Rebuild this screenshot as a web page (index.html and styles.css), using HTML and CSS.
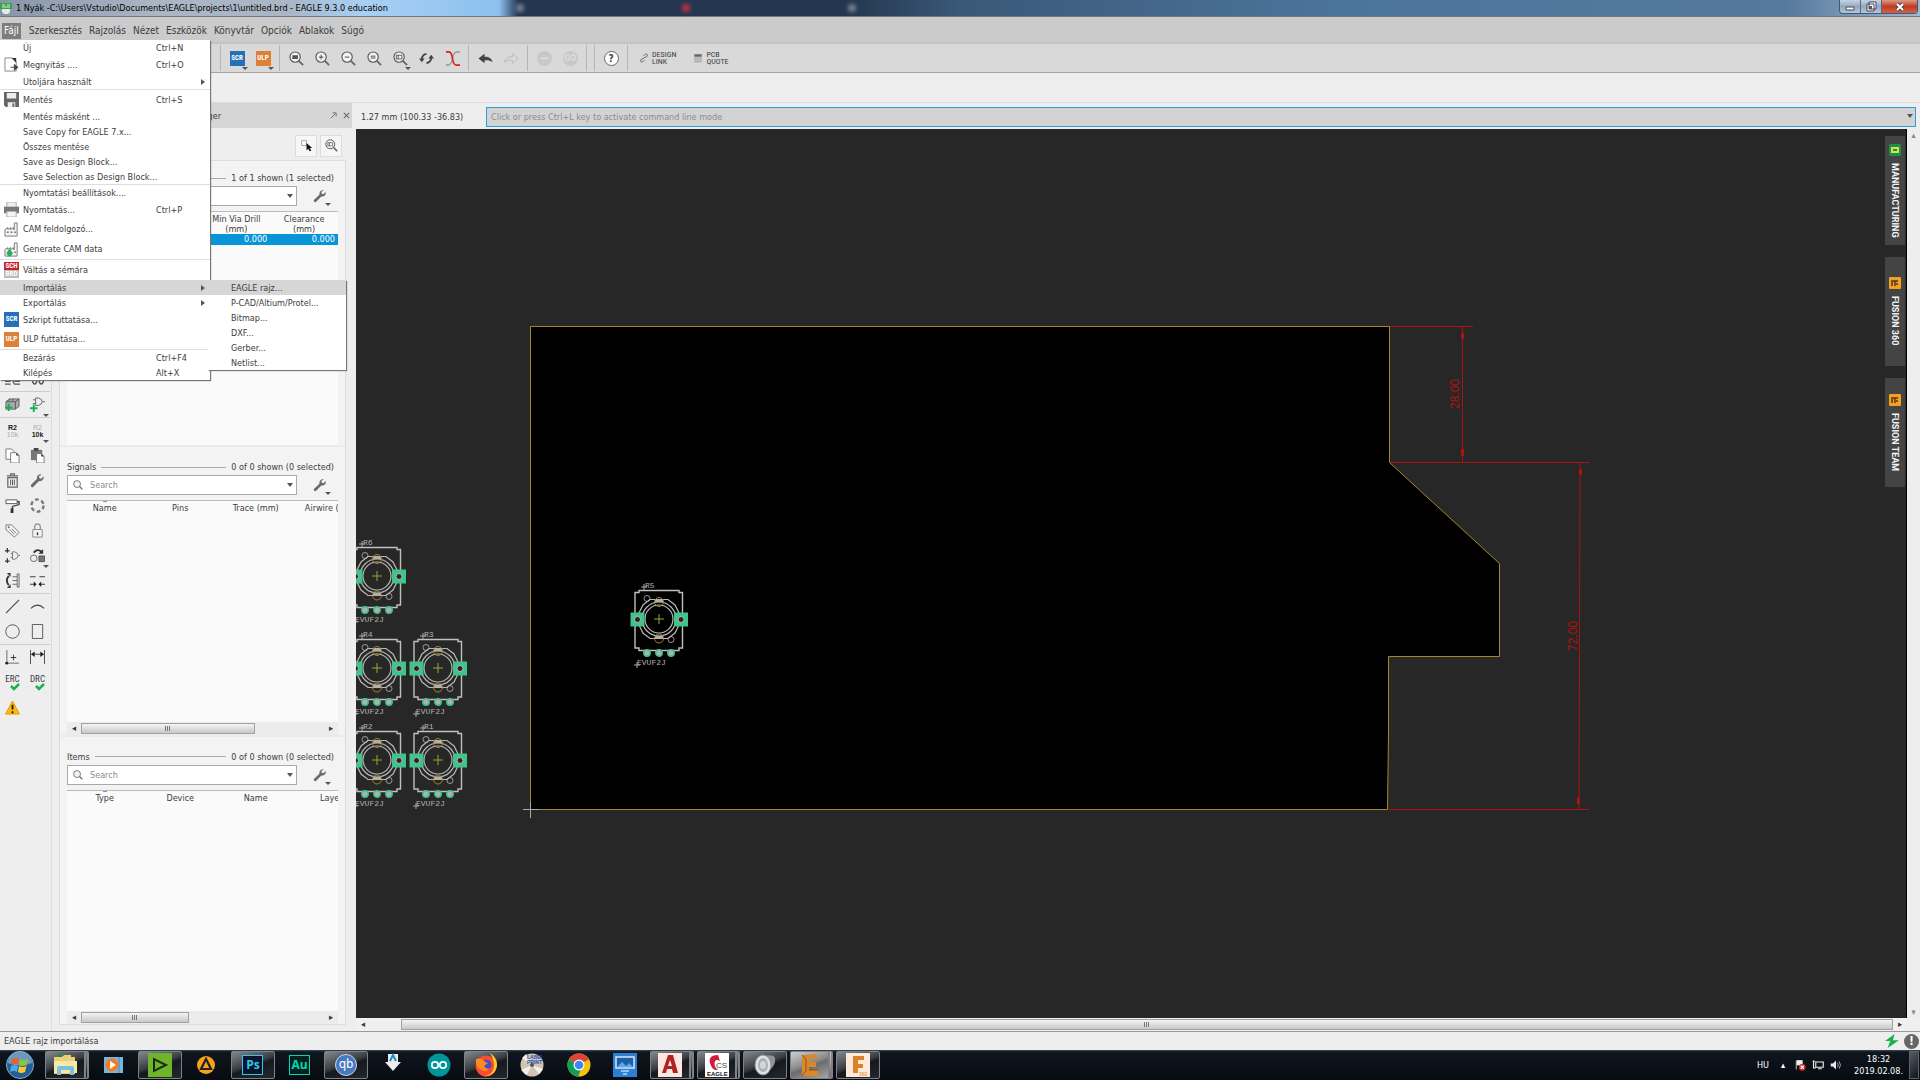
FILE: index.html
```html
<!DOCTYPE html>
<html lang="hu">
<head>
    <meta charset="UTF-8">
    <meta name="viewport" content="width=device-width, initial-scale=1.0">
    <title>EAGLE 9.3.0 education</title>
    <link rel="stylesheet" href="styles.css">
</head>
<body>
    <!-- Shared icons -->
    <svg class="defs" aria-hidden="true">
        <symbol id="lens" viewBox="0 0 16 16">
            <circle cx="6.5" cy="6.5" r="5.5" fill="#f4f4f4" stroke="#555" stroke-width="1.2"/>
            <path d="M10.5 10.5l4.5 4.5" stroke="#666" stroke-width="2"/>
        </symbol>
        <symbol id="wrench" viewBox="0 0 16 16">
            <path d="M2.5 13.5L9 7" stroke="#6a6a6a" stroke-width="3.2" stroke-linecap="round"/>
            <path d="M12.5 1.5a4 4 0 0 0-5 5l2 2a4 4 0 0 0 5-5l-2.5 2.5-2-0.5-0.5-2z" fill="#6a6a6a"/>
        </symbol>
        <symbol id="factory" viewBox="0 0 16 16">
            <path d="M1 15V8l3-2v2l3-2v2l3-2v2h1V1h3v14z" fill="#f4f4f4" stroke="#777"/>
            <path d="M3 11h2M7 11h2M11 11h2" stroke="#777" stroke-width="1.5"/>
        </symbol>
        <symbol id="fusion" viewBox="0 0 12 12">
            <rect width="12" height="12" rx="1" fill="#f5a01e"/>
            <path d="M3 9V4h6M6 9V4M3 4v2M8 6v2" fill="none" stroke="#4a3a20" stroke-width="1.5"/>
        </symbol>
        <symbol id="part" viewBox="-30 -30 60 70" overflow="visible">
            <path d="M-20 -28.5H20V-26.5H23.5V29H20V31.5H-20V29H-24V-26.5H-20z" fill="none" stroke="#c0c0c0" stroke-width="1.4"/>
            <g fill="none" stroke="#b8b8b8" stroke-width="1.2">
                <circle r="14"/>
                <circle r="17"/>
                <path d="M-9 -19.5H9L16 -14L20 -6V6L16 14L9 19.5H-9L-16 14L-20 6V-6L-16 -14z"/>
                <circle cx="-12" cy="-20.5" r="3" stroke-width="0.8"/>
                <circle cx="12" cy="20.5" r="3" stroke-width="0.8"/>
            </g>
            <path d="M-4 -17h8v-3h-8zM-4 20h8v-3h-8z" fill="#b0b0b0"/>
            <circle cy="-17" r="4.5" fill="none" stroke="#a8822a"/>
            <circle cy="19.5" r="4.5" fill="none" stroke="#a8822a"/>
            <path d="M-28.5 -6.5h14v14h-14zM15 -6.5h14v14H15z" fill="#3fc48c"/>
            <circle cx="-21.5" cy="0.5" r="3" fill="#262626" stroke="#bbb"/>
            <circle cx="22" cy="0.5" r="3" fill="#262626" stroke="#bbb"/>
            <g fill="#b0b0b0" stroke="#3fc48c" stroke-width="1.5">
                <circle cx="-12" cy="34" r="3.2"/>
                <circle cy="34" r="3.2"/>
                <circle cx="12" cy="34" r="3.2"/>
            </g>
            <path d="M-5 0H5M0 -5V5" stroke="#9aa832"/>
            <path d="M-18 -32h6M-15 -35v6M-25 46h6M-22 43v6" stroke="#aaa"/>
        </symbol>
    </svg>

    <header class="titlebar">
        <svg class="app-icon" viewBox="0 0 12 12"><path d="M0 1h12v6H0z" fill="#37a34a"/><path d="M2 7h8v3l-2 2H4l-2-2z" fill="#e8e8e8"/><path d="M2 3h3M7 3h3M2 5h8" stroke="#d5f0d5"/></svg>
        <h1>1 Nyák -C:\Users\Vstudio\Documents\EAGLE\projects\1\untitled.brd - EAGLE 9.3.0 education</h1>
        <div class="behind"><i></i><i></i><i></i></div>
        <div class="window-buttons">
            <button aria-label="Minimize"><svg viewBox="0 0 12 12"><path d="M2 6h8v3H2z" fill="#fff" stroke="#445"/></svg></button>
            <button aria-label="Restore"><svg viewBox="0 0 12 12"><path d="M4 1h7v7H4zM2 3h7v7H2z" fill="#fff" stroke="#445"/><path d="M4 5h3v3H4z" fill="#556"/></svg></button>
            <button class="close" aria-label="Close"><svg viewBox="0 0 12 12"><path d="M3 3l6 6M9 3l-6 6" stroke="#544" stroke-width="4"/><path d="M3 3l6 6M9 3l-6 6" stroke="#fff" stroke-width="2"/></svg></button>
        </div>
    </header>

    <nav class="menubar">
        <button class="active">Fájl</button>
        <button>Szerkesztés</button>
        <button>Rajzolás</button>
        <button>Nézet</button>
        <button>Eszközök</button>
        <button>Könyvtár</button>
        <button>Opciók</button>
        <button>Ablakok</button>
        <button>Súgó</button>
    </nav>

    <div class="toolbar">
        <span class="sep"></span>
        <button class="drop"><b class="tag scr">SCR</b></button>
        <button class="drop"><b class="tag ulp">ULP</b></button>
        <span class="sep"></span>
        <button aria-label="Zoom fit"><svg viewBox="0 0 16 16"><use href="#lens"/><path d="M3.5 4.5h6v4h-6z" fill="#555"/></svg></button>
        <button aria-label="Zoom in"><svg viewBox="0 0 16 16"><use href="#lens"/><path d="M4 6.5h5M6.5 4v5" stroke="#444"/></svg></button>
        <button aria-label="Zoom out"><svg viewBox="0 0 16 16"><use href="#lens"/><path d="M4 6.5h5" stroke="#444"/></svg></button>
        <button aria-label="Redraw"><svg viewBox="0 0 16 16"><use href="#lens"/><path d="M4 5.5h5M4 7.5h5" stroke="#444"/></svg></button>
        <button class="drop" aria-label="Zoom select"><svg viewBox="0 0 16 16"><use href="#lens"/><path d="M3.5 4.5h6v4h-6zM5.5 4.5v4" fill="none" stroke="#555"/></svg></button>
        <button aria-label="Refresh"><svg viewBox="0 0 16 16"><path d="M3 9q0-5 5-6M13 7q0 5-5 6" fill="none" stroke="#444" stroke-width="2"/><path d="M0 8h6l-3 4zM10 8h6l-3-4z" fill="#444"/></svg></button>
        <button aria-label="Cross"><svg viewBox="0 0 16 16"><path d="M16 1h-4Q9 2 8 8t-4 7H1" fill="none" stroke="#999" stroke-width="1.5"/><path d="M1 1h3q3 0 4 7t4 7h4" fill="none" stroke="#dc1f1f" stroke-width="1.8"/></svg></button>
        <span class="sep"></span>
        <button aria-label="Undo"><svg viewBox="0 0 16 16"><path d="M0.5 8L7 3v3c5 0 8 2 8.500 6C13 10 10 9.500 7 10v3z" fill="#444"/></svg></button>
        <button aria-label="Redo" disabled><svg viewBox="0 0 16 16"><path d="M15.500 8L9 3v3C4 6 1 8 .5 12 3 10 6 9.500 9 10v3z" fill="none" stroke="#bbb"/></svg></button>
        <span class="sep"></span>
        <button aria-label="Stop" disabled><svg viewBox="0 0 16 16"><circle cx="8" cy="8" r="8" fill="#c8c8c8"/><path d="M4 8h8" stroke="#ddd" stroke-width="2"/></svg></button>
        <button disabled><b class="go">GO</b></button>
        <span class="sep"></span>
        <span class="sep close-sep"></span>
        <button aria-label="Help"><b class="help">?</b></button>
        <span class="sep"></span>
        <button class="wide"><svg viewBox="0 0 16 16"><path d="M6 10l4-4M7 5l3-3q2-1 3 0t0 3l-3 3M9 11l-3 3q-2 1-3 0t0-3l3-3" fill="none" stroke="#666" stroke-width="1.5"/></svg><span>DESIGN<br>LINK</span></button>
        <button class="wide"><svg viewBox="0 0 16 16"><path d="M2 2h12v4H2z" fill="#666"/><path d="M2 8h12M2 11h12M2 14h12" stroke="#777"/></svg><span>PCB<br>QUOTE</span></button>
    </div>

    <div class="options"></div>

    <main class="workspace">
        <aside class="tools">
            <div class="tool-group">
                <button><svg viewBox="0 0 16 16"><path d="M0 11h6M0 14h6M10 11h6M10 14h6M7 8l3 6" fill="none" stroke="#555" stroke-width="1.2"/></svg></button>
                <button><svg viewBox="0 0 16 16"><path d="M3 8v4q2 4 4 0V8M10 8v4q2 4 4 0V8" fill="none" stroke="#444" stroke-width="1.5"/></svg></button>
            </div>
            <div class="tool-group">
                <button><svg viewBox="0 0 16 16"><path d="M1 5l4-3h10v8l-4 3H1z" fill="#aaa" stroke="#666"/><path d="M1 5h10v8M11 5l4-3M4 4l1-2M8 4l1-2" fill="none" stroke="#555"/><path d="M0 11h8M4 7v8" stroke="#19b14b" stroke-width="2"/></svg></button>
                <button class="drop"><svg viewBox="0 0 16 16"><path d="M6 1h3q4 1 4 4t-4 4H6zM3 3h3M3 7h3M13 5h3" fill="none" stroke="#666"/><path d="M0 12h8M4 8v8" stroke="#19b14b" stroke-width="2"/></svg></button>
            </div>
            <div class="tool-group">
                <button class="value"><b>R2</b><span>10k</span></button>
                <button class="value drop"><span>R2</span><b>10k</b></button>
                <button><svg viewBox="0 0 16 16"><path d="M1 1h6l3 3v8H1z" fill="#fff" stroke="#777"/><path d="M6 5h6l3 3v8H6z" fill="#fff" stroke="#777"/><path d="M12 5v3h3z" fill="#333"/></svg></button>
                <button><svg viewBox="0 0 16 16"><path d="M1 2h12v11H1z" fill="#777"/><path d="M4 0h5v3H4z" fill="#444"/><path d="M7 6h5l3 3v7H7z" fill="#fff" stroke="#777"/><path d="M12 6v3h3z" fill="#333"/></svg></button>
                <button><svg viewBox="0 0 16 16"><path d="M2 3h12M6 3V1h4v2M3 5h10v10H3z" fill="none" stroke="#666" stroke-width="1.3"/><path d="M6 7v6M8 7v6M10 7v6" stroke="#555"/></svg></button>
                <button><svg viewBox="0 0 16 16"><use href="#wrench"/></svg></button>
                <button><svg viewBox="0 0 16 16"><path d="M1 2h12v4H1z" fill="#fff" stroke="#555"/><path d="M13 4h2v3L8 9v3" fill="none" stroke="#444" stroke-width="1.5"/><path d="M6 11h3v5H6z" fill="#333"/></svg></button>
                <button><svg viewBox="0 0 16 16"><circle cx="8" cy="8" r="6.5" fill="none" stroke="#777" stroke-width="2.5" stroke-dasharray="4 2.8"/></svg></button>
                <button><svg viewBox="0 0 16 16"><path d="M1 2h6l8 8-5 5-9-8z" fill="#f5f5f5" stroke="#777"/><path d="M5 7l5 5M7 6l5 5" stroke="#777"/><circle cx="4" cy="4.5" r="1" fill="#666"/></svg></button>
                <button><svg viewBox="0 0 16 16"><path d="M5 7V4q0-3 3-3t3 3v3" fill="none" stroke="#999" stroke-width="1.5"/><path d="M3 7h10v8H3z" fill="#f5f5f5" stroke="#888"/><path d="M8 10v3" stroke="#333" stroke-width="1.5"/></svg></button>
                <button><svg viewBox="0 0 16 16"><path d="M0 3h5M2.500 0v5M0 14h5M2.500 11v5" stroke="#333" stroke-width="1.3"/><path d="M8 4h2q4 1 4 4t-4 4H8zM6 6h2M6 10h2M14 8h2" fill="none" stroke="#777"/></svg></button>
                <button class="drop"><svg viewBox="0 0 16 16"><path d="M4 5q4-5 8-1" fill="none" stroke="#333" stroke-width="2"/><path d="M14 1v5H9z" fill="#333"/><circle cx="4" cy="11" r="3.5" fill="none" stroke="#666"/><path d="M9.500 8.500h6v6h-6z" fill="#777" stroke="#456"/></svg></button>
                <button><svg viewBox="0 0 16 16"><path d="M4 3q-4 5 0 10" fill="none" stroke="#333" stroke-width="2"/><path d="M2 0h4v4zM2 16h4v-4z" fill="#333"/><path d="M8 4h5M8 8h5M8 12h5M13 1h2v14h-2z" fill="none" stroke="#666"/></svg></button>
                <button><svg viewBox="0 0 16 16"><path d="M0 4h6M10 4h6M0 12h5M11 12h5" stroke="#333"/><path d="M4 9l3 3-3 3zM12 9l-3 3 3 3z" fill="#222"/></svg></button>
            </div>
            <div class="tool-group">
                <button><svg viewBox="0 0 16 16"><path d="M1 15L15 1" stroke="#444" stroke-width="1.2"/></svg></button>
                <button><svg viewBox="0 0 16 16"><path d="M1 10q7-7 14 0" fill="none" stroke="#444" stroke-width="1.2"/></svg></button>
                <button><svg viewBox="0 0 16 16"><circle cx="8" cy="8" r="7.2" fill="none" stroke="#555"/></svg></button>
                <button><svg viewBox="0 0 16 16"><path d="M2.500 .5h11v15h-11z" fill="none" stroke="#555"/></svg></button>
            </div>
            <div class="tool-group">
                <button><svg viewBox="0 0 16 16"><path d="M2 0v15M0 14h15" stroke="#666"/><path d="M6 8h6M9 5v6" stroke="#333"/><circle cx="2" cy="14" r="1.5" fill="#222"/></svg></button>
                <button><svg viewBox="0 0 16 16"><path d="M.5 0v15M15.500 0v15M2 4.500h12" stroke="#444"/><path d="M1 4.500l4-3v6zM15 4.500l-4-3v6z" fill="#222"/></svg></button>
                <button class="check">ERC<svg viewBox="0 0 10 8"><path d="M1 3l3 3 5-5" fill="none" stroke="#19b14b" stroke-width="2.5"/></svg></button>
                <button class="check">DRC<svg viewBox="0 0 10 8"><path d="M1 3l3 3 5-5" fill="none" stroke="#19b14b" stroke-width="2.5"/></svg></button>
                <button><svg viewBox="0 0 16 16"><path d="M8 1l7.500 14H.5z" fill="#fdb813" stroke="#e39b00"/><path d="M8 5v5M8 12v2" stroke="#222" stroke-width="2"/></svg></button>
            </div>
        </aside>

        <section class="manager">
            <div class="manager-head">
                <h2>Design Manager</h2>
                <button aria-label="Float"><svg viewBox="0 0 8 8"><path d="M1 7l5-5M3 1h4v4" fill="none" stroke="#666"/></svg></button>
                <button aria-label="Close"><svg viewBox="0 0 8 8"><path d="M1 1l6 6M7 1L1 7" stroke="#666" stroke-width="1.2"/></svg></button>
            </div>
            <div class="manager-tools">
                <button aria-label="Select"><svg viewBox="0 0 16 16"><path d="M2 2h6v6H2z" fill="#fff" stroke="#999"/><path d="M8 5v9l2-2 2 3 2-1-2-3h3z" fill="#111"/></svg></button>
                <button aria-label="Zoom to selection"><svg viewBox="0 0 16 16"><use href="#lens"/><path d="M3.500 4.500h6v4h-6zM5.500 4.500v4" fill="none" stroke="#666"/></svg></button>
            </div>
            <div class="groups">
                <div class="group">
                    <div class="group-title"><h3>Classes</h3><hr><span>1 of 1 shown (1 selected)</span></div>
                    <div class="search">
                        <label><svg viewBox="0 0 16 16"><use href="#lens"/></svg><input type="text" aria-label="Search classes"></label>
                        <button class="drop" aria-label="Settings"><svg viewBox="0 0 16 16"><use href="#wrench"/></svg></button>
                    </div>
                    <div class="list">
                        <table class="classes">
                            <tr><th>Name</th><th>Width</th><th>Min Via Drill<br>(mm)</th><th>Clearance<br>(mm)</th></tr>
                            <tr class="selected"><td></td><td></td><td>0.000</td><td>0.000</td></tr>
                        </table>
                    </div>
                </div>
                <div class="group">
                    <div class="group-title"><h3>Signals</h3><hr><span>0 of 0 shown (0 selected)</span></div>
                    <div class="search">
                        <label><svg viewBox="0 0 16 16"><use href="#lens"/></svg><input type="text" placeholder="Search" aria-label="Search signals"></label>
                        <button class="drop" aria-label="Settings"><svg viewBox="0 0 16 16"><use href="#wrench"/></svg></button>
                    </div>
                    <div class="list">
                        <table><tr><th class="sorted">Name</th><th>Pins</th><th>Trace (mm)</th><th>Airwire (mm)</th></tr></table>
                        <div class="scroll"><span>◂</span><div class="thumb long"></div><span>▸</span></div>
                    </div>
                </div>
                <div class="group">
                    <div class="group-title"><h3>Items</h3><hr><span>0 of 0 shown (0 selected)</span></div>
                    <div class="search">
                        <label><svg viewBox="0 0 16 16"><use href="#lens"/></svg><input type="text" placeholder="Search" aria-label="Search items"></label>
                        <button class="drop" aria-label="Settings"><svg viewBox="0 0 16 16"><use href="#wrench"/></svg></button>
                    </div>
                    <div class="list">
                        <table><tr><th class="sorted">Type</th><th>Device</th><th>Name</th><th>Layer</th></tr></table>
                        <div class="scroll"><span>◂</span><div class="thumb"></div><span>▸</span></div>
                    </div>
                </div>
            </div>
        </section>

        <section class="editor">
            <div class="command">
                <span class="coords">1.27 mm (100.33 -36.83)</span>
                <div class="command-box"><input type="text" placeholder="Click or press Ctrl+L key to activate command line mode" aria-label="Command line"></div>
            </div>
            <div class="canvas-row">
                <div class="canvas">
                    <svg class="board" viewBox="356 129 1550 889" preserveAspectRatio="xMinYMin meet">
                        <path d="M530.500 326.500H1389.500V462.500L1499.500 563.500V656.500H1388.500V733L1387.500 809.500H530.500z" fill="#000" stroke="#a8842c"/>
                        <path d="M523 809.500h16M530.500 802v16" stroke="#aaa"/>
                        <!-- dimensions -->
                        <g stroke="#a81414" fill="none">
                            <path d="M1390 326.500h83M1390 462.500h199.500M1388 809.500h201M1462.500 327v135M1580 463L1579 809"/>
                            <path d="M1462.500 333v6M1462.500 449v7M1580.500 469v6M1578.500 797v7" stroke-width="3"/>
                        </g>
                        <g class="dimension">
                            <text transform="translate(1459 409) rotate(-90)">28.00</text>
                            <text transform="translate(1577 651) rotate(-90)">72.00</text>
                        </g>
                        <!-- potentiometers -->
                        <use href="#part" x="347" y="546" width="60" height="70"/>
                        <use href="#part" x="347" y="638" width="60" height="70"/>
                        <use href="#part" x="408" y="638" width="60" height="70"/>
                        <use href="#part" x="347" y="730" width="60" height="70"/>
                        <use href="#part" x="408" y="730" width="60" height="70"/>
                        <use href="#part" x="629" y="589" width="60" height="70"/>
                        <g class="part-label">
                            <text x="363" y="545">R6</text><text x="355" y="622">EVUF2J</text>
                            <text x="363" y="637">R4</text><text x="355" y="714">EVUF2J</text>
                            <text x="424" y="637">R3</text><text x="416" y="714">EVUF2J</text>
                            <text x="363" y="729">R2</text><text x="355" y="806">EVUF2J</text>
                            <text x="424" y="729">R1</text><text x="416" y="806">EVUF2J</text>
                            <text x="645" y="588">R5</text><text x="637" y="665">EVUF2J</text>
                        </g>
                    </svg>
                    <div class="side-tabs">
                        <button><svg viewBox="0 0 12 12"><rect width="12" height="12" rx="1" fill="#1d9148"/><path d="M3 4h6v4H3z" fill="none" stroke="#d8e04a" stroke-width="2"/><path d="M4 5h4v2H4z" fill="#1d9148"/></svg>MANUFACTURING</button>
                        <button><svg viewBox="0 0 12 12"><use href="#fusion"/></svg>FUSION 360</button>
                        <button><svg viewBox="0 0 12 12"><use href="#fusion"/></svg>FUSION TEAM</button>
                    </div>
                </div>
                <div class="v-scroll"><span>▴</span><span>▾</span></div>
            </div>
            <div class="scroll h-scroll"><span>◂</span><div class="thumb"></div><span>▸</span></div>
        </section>
    </main>

    <div class="status">
        <span>EAGLE rajz importálása</span>
        <svg viewBox="0 0 16 16"><path d="M11 0L0 8h6l-3 8L16 7H9z" fill="#19b14b"/></svg>
        <b class="alert">!</b>
    </div>

    <footer class="taskbar">
        <button class="start" aria-label="Start"><svg viewBox="0 0 28 28"><circle cx="14" cy="14" r="13.5" fill="#235f96" stroke="#7fa9c8"/><path d="M2 12a12 12 0 0 1 24 0q-12 5-24 0z" fill="#8ab4d0" opacity=".7"/><path d="M6 8q4-2 7-.5l-1 6q-3-1.500-7 0z" fill="#e8622b"/><path d="M14 8q4 2 8 0l-1.500 6q-4 2-7.500 0z" fill="#8cc63f"/><path d="M5 15q4-2 7 0l-1 6q-3-2-7 0z" fill="#4aa8e8"/><path d="M13 15q4 2 7.500 0L19 21q-4 2-7 0z" fill="#fdc92f"/></svg></button>
        <div class="tasks">
            <button class="open stacked"><svg viewBox="0 0 24 24"><path d="M1 4h8l1-2h8v2h4v17H1z" fill="#e8cf78"/><path d="M1 8h23v12H1z" fill="#f8e9a5"/><path d="M4 22v-7q0-2 2-2h13q2 0 2 2v7h-4v-5H8v5z" fill="#79bfe4"/><path d="M4 3h2M9 2h2" stroke="#2a9c3c" stroke-width="2"/></svg></button>
            <button><svg viewBox="0 0 24 24"><path d="M3 4h19v16H3z" fill="#7ab6dc"/><path d="M18 4v16" stroke="#4a88b4"/><circle cx="11" cy="12" r="6.5" fill="#f47a20"/><path d="M9 8l6 4-6 4z" fill="#fff"/></svg></button>
            <button class="open"><svg viewBox="0 0 24 24"><path d="M0 0h24v24H0z" fill="#6fb52c"/><path d="M6 6v12l12-6z" fill="none" stroke="#1c2c10" stroke-width="2"/></svg></button>
            <button><svg viewBox="0 0 24 24"><circle cx="12" cy="12" r="9" fill="#f7a11b"/><path d="M12 6l5 10H7z" fill="none" stroke="#222" stroke-width="2.2"/></svg></button>
            <button class="open"><b class="adobe ps">Ps</b></button>
            <button><b class="adobe au">Au</b></button>
            <button class="open"><b class="qb">qb</b></button>
            <button><svg viewBox="0 0 24 24"><path d="M7 1h10v8h3l-8 9-8-9h3z" fill="#eee"/><path d="M9 8l3-6 3 6" fill="none" stroke="#1a90c4" stroke-width="2"/></svg></button>
            <button><svg viewBox="0 0 24 24"><circle cx="12" cy="12" r="11.5" fill="#00979c"/><circle cx="8" cy="12" r="3.2" fill="none" stroke="#fff" stroke-width="1.7"/><circle cx="16" cy="12" r="3.2" fill="none" stroke="#fff" stroke-width="1.7"/></svg></button>
            <button class="open"><svg viewBox="0 0 24 24"><circle cx="12" cy="13" r="10.5" fill="#ff4a2d"/><path d="M16 0q9 6 6.500 15a11 11 0 0 1-13 8q8 0 10-7T16 0z" fill="#ffc928"/><circle cx="12" cy="12" r="5.5" fill="#4b4bc8"/><path d="M2 6q6-2 9 3l3 1-4 3q2 4 6 2-3 5-9 2T2 6z" fill="#ff8a1f"/></svg></button>
            <button><svg viewBox="0 0 24 24"><circle cx="12" cy="12" r="11.5" fill="#cfc5b2"/><path d="M12 12L2 5l4-4zM12 12l11 4-4 5zM12 12L1 17l6 5z" fill="#f3efe6"/><circle cx="12" cy="12" r="2" fill="#555"/><text x="7" y="6" class="label-text">LABEL</text><text x="7" y="11" class="label-text">PRINT</text></svg></button>
            <button><svg viewBox="0 0 24 24"><circle cx="12" cy="12" r="11.5" fill="#f4c20d"/><path d="M2 6.300A11.500 11.500 0 0 1 22 6.300L12 12z" fill="#db4437"/><path d="M2 6.300A11.500 11.500 0 0 0 11 23.500L15 14 12 12z" fill="#0f9d58"/><circle cx="12" cy="12" r="5.5" fill="#fff"/><circle cx="12" cy="12" r="4.3" fill="#4285f4"/></svg></button>
            <button><svg viewBox="0 0 24 24"><path d="M0 0h24v24H0z" fill="#2a80d4"/><path d="M3 4h18v11H3z" fill="#1d5fa8" stroke="#d5e8fa" stroke-width="1.5"/><path d="M4 14l5-5 4 4 3-3 4 4z" fill="#5fa8e8"/><path d="M8 18h8M10 21h4" stroke="#fff"/></svg></button>
            <button class="open stacked"><svg viewBox="0 0 24 24"><path d="M0 0h24v24H0z" fill="#fbe8e0"/><path d="M10 2h5l5 18h-5l-1-4H9l-1 4H4zM12 7l-2 6h4z" fill="#b32222" fill-rule="evenodd"/></svg></button>
            <button class="open stacked"><svg viewBox="0 0 24 24"><path d="M0 0h24v24H0z" fill="#fff"/><path d="M13 2Q3 2 5 10t8 7Q8 13 10 8q2-2 5 0z" fill="#d01c38"/><text x="11" y="15" class="cs-text">CS</text><text x="2" y="23" class="eagle-text">EAGLE</text></svg></button>
            <button class="open"><svg viewBox="0 0 24 24"><path d="M12 3q8-2 10 2 1 6-4 11l-6 5z" fill="#8d949a"/><ellipse cx="10" cy="12" rx="8" ry="10" fill="#dfe3e6" stroke="#8a9096"/><ellipse cx="10" cy="12" rx="5" ry="7" fill="#a9b0b6"/><ellipse cx="10" cy="12" rx="3" ry="4" fill="#d0d6da"/></svg></button>
            <button class="open current stacked"><svg viewBox="0 0 24 24"><path d="M4 2l15-1v5h-8v3h7v5h-7v3h9v6H4z" fill="#d9882b"/><path d="M4 2l4 4v12l-4 5M11 17l9 0" fill="none" stroke="#8c4f10"/></svg></button>
            <button class="open"><svg viewBox="0 0 24 24"><path d="M0 0h24v24H0z" fill="#fdeadb"/><path d="M7 3h11v4h-6v4h5v4h-5v5H7z" fill="#d9822b"/><text x="13" y="23" class="f360-text">360</text></svg></button>
        </div>
        <div class="tray">
            <span>HU</span>
            <span class="up">▴</span>
            <svg viewBox="0 0 16 16"><path d="M3 2v12M4 2h7v6H4z" fill="#eee" stroke="#eee"/><circle cx="11" cy="11" r="4.5" fill="#d92a2a"/><path d="M9 9l4 4M13 9l-4 4" stroke="#fff" stroke-width="1.5"/></svg>
            <svg viewBox="0 0 16 16"><path d="M5 4h10v7H5zM8 13h5M2 2v5M1 3h3M2 7v5h3" fill="none" stroke="#eee" stroke-width="1.5"/></svg>
            <svg viewBox="0 0 16 16"><path d="M1 6h3l4-4v12l-4-4H1z" fill="#eee"/><path d="M10 5q2 3 0 6M12 3q4 5 0 10" fill="none" stroke="#ccc"/></svg>
            <time>18:32<br>2019.02.08.</time>
            <button class="show-desktop" aria-label="Show desktop"></button>
        </div>
    </footer>

    <div class="menu file-menu">
        <button><span>Új</span><kbd>Ctrl+N</kbd></button>
        <button class="tall"><svg viewBox="0 0 16 16"><path d="M1 1h8l4 4v10H1z" fill="#fff" stroke="#888"/><path d="M8 1l5 5V1z" fill="#333"/><path d="M7 11h5M11 8l4 3-4 3z" fill="#444" stroke="#444"/></svg><span>Megnyitás ....</span><kbd>Ctrl+O</kbd></button>
        <button class="more"><span>Utoljára használt</span></button>
        <hr>
        <button class="tall"><svg viewBox="0 0 16 16"><path d="M0 0h16v16H2l-2-2z" fill="#666"/><path d="M3 1h10v6H3zM4 11h8v5H4z" fill="#eee"/><path d="M9 12h2v4H9z" fill="#666"/></svg><span>Mentés</span><kbd>Ctrl+S</kbd></button>
        <button><span>Mentés másként ...</span></button>
        <button><span>Save Copy for EAGLE 7.x...</span></button>
        <button><span>Összes mentése</span></button>
        <button><span>Save as Design Block...</span></button>
        <button><span>Save Selection as Design Block...</span></button>
        <hr>
        <button><span>Nyomtatási beállítások....</span></button>
        <button class="tall"><svg viewBox="0 0 16 16"><path d="M3 0h10v6H3z" fill="#eee" stroke="#aaa"/><path d="M0 5h16v7H0z" fill="#777"/><path d="M3 10h10v6H3z" fill="#f4f4f4" stroke="#aaa"/></svg><span>Nyomtatás...</span><kbd>Ctrl+P</kbd></button>
        <button class="taller"><svg viewBox="0 0 16 16"><use href="#factory"/></svg><span>CAM feldolgozó...</span></button>
        <button class="taller"><svg viewBox="0 0 16 16"><use href="#factory"/><path d="M4.500 8h3v4H10l-4 4-4-4h2.500z" fill="#19b14b"/></svg><span>Generate CAM data</span></button>
        <hr>
        <button class="taller"><b class="sch"><i>SCH</i><i>BRD</i></b><span>Váltás a sémára</span></button>
        <button class="more hover"><span>Importálás</span></button>
        <button class="more"><span>Exportálás</span></button>
        <button class="tall"><b class="tag scr">SCR</b><span>Szkript futtatása...</span></button>
        <button class="taller"><b class="tag ulp">ULP</b><span>ULP futtatása...</span></button>
        <hr>
        <button><span>Bezárás</span><kbd>Ctrl+F4</kbd></button>
        <button><span>Kilépés</span><kbd>Alt+X</kbd></button>
    </div>

    <div class="menu import-menu">
        <button class="hover"><span>EAGLE rajz...</span></button>
        <button><span>P-CAD/Altium/Protel...</span></button>
        <button><span>Bitmap...</span></button>
        <button><span>DXF...</span></button>
        <button><span>Gerber...</span></button>
        <button><span>Netlist...</span></button>
    </div>
</body>
</html>
```
FILE: styles.css
```css
* {
    box-sizing: border-box;
}

body {
    margin: 0;
    height: 100vh;
    display: flex;
    flex-direction: column;
    overflow: hidden;
    background-color: #eee;
    color: #3c3c3c;
    font-family: "DejaVu Sans Condensed", "DejaVu Sans", sans-serif;
    font-size: 9px;
    line-height: 12px;
}

button {
    border: 0;
    padding: 0;
    background: none;
    color: inherit;
    font: inherit;
}

h1, h2, h3 {
    margin: 0;
    font-size: 9px;
    font-weight: normal;
}

svg {
    display: block;
    flex: none;
}

.defs {
    position: absolute;
    width: 0;
    height: 0;
}

/* Title bar */
.titlebar {
    height: 17px;
    flex: none;
    display: flex;
    align-items: center;
    background: linear-gradient(90deg, #8795a8, #aab6c5 8%, #a9b6c6 15%, #a8d0f4 19%, #8cc0ee 26%, #24364f 27%, #24364f 44%, #3a5878 50%, #4c759c 70%, #55799d 93%, #9db8d2);
    border-bottom: 1px solid #6d7580;
    color: #000;
}

.app-icon {
    width: 12px;
    height: 12px;
    margin: 0 4px 0 0;
}

.behind {
    flex: 1;
    display: flex;
    gap: 158px;
    padding-left: 128px;
}

.behind i {
    width: 8px;
    height: 8px;
    border-radius: 4px;
    background: #7a8494;
    filter: blur(2px);
}

.behind i:nth-child(2) {
    background: #c03040;
}

.window-buttons {
    display: flex;
    align-self: flex-start;
    margin-right: 2px;
    border: 1px solid #44576c;
    border-top: 0;
    border-radius: 0 0 4px 4px;
    overflow: hidden;
}

.window-buttons button {
    width: 21px;
    height: 13px;
    display: flex;
    justify-content: center;
    align-items: center;
    border-right: 1px solid #56697e;
    background: linear-gradient(#c5d4e4, #93a9c0 50%, #b4c6da);
}

.window-buttons .close {
    width: 35px;
    border: 0;
    background: linear-gradient(#dd9a88, #c03c20 50%, #d4624a);
}

.window-buttons svg {
    width: 12px;
    height: 12px;
}

/* Menu bar */
.menubar {
    height: 27px;
    flex: none;
    display: flex;
    align-items: center;
    gap: 7px;
    padding: 2px 2px 0;
    background-color: #cbcbcb;
    border-bottom: 2px solid #c4c4c4;
    font-size: 10px;
}

.menubar .active {
    padding: 2px;
    margin-right: 1px;
    background-color: #7d7d7d;
    color: #fff;
}

/* Toolbar */
.toolbar {
    height: 29px;
    flex: none;
    display: flex;
    align-items: center;
    padding-left: 217px;
    background-color: #d9d9d9;
    border-bottom: 1px solid #a5a5a5;
}

.toolbar button {
    width: 26px;
    height: 24px;
    display: flex;
    justify-content: center;
    align-items: center;
}

.toolbar svg {
    width: 15px;
    height: 15px;
}

.toolbar .sep {
    width: 1px;
    height: 26px;
    margin: 0 3px;
    background-color: #b5b5b5;
}

.toolbar .sep.close-sep {
    margin: 0 3px 0 4px;
}

.toolbar .wide {
    width: auto;
    gap: 3px;
    padding: 0 9px 0 8px;
    text-align: left;
    font-family: "Roboto Condensed", "DejaVu Sans Condensed", sans-serif;
    font-size: 8px;
    line-height: 7px;
}

.toolbar .wide svg {
    width: 10px;
    height: 10px;
}

.drop {
    position: relative;
}

.drop::after {
    content: "";
    position: absolute;
    right: 2px;
    bottom: 0;
    border: 3px solid transparent;
    border-top-color: #555;
    border-bottom: 0;
}

.tag {
    width: 15px;
    height: 15px;
    color: #fff;
    font: bold 7px/15px "Roboto Condensed", sans-serif;
    text-align: center;
}

.scr {
    background-color: #2670b8;
}

.ulp {
    background-color: #dd8038;
}

.go, .help {
    width: 15px;
    height: 15px;
    border-radius: 8px;
    background-color: #c8c8c8;
    color: #ddd;
    font-size: 8px;
    line-height: 15px;
    text-align: center;
}

.help {
    border: 1px solid #666;
    background-color: #fff;
    color: #444;
    font-size: 10px;
    line-height: 13px;
}

.options {
    height: 30px;
    flex: none;
    border-bottom: 1px solid #ddd;
}

/* Workspace */
.workspace {
    flex: 1;
    min-height: 0;
    display: flex;
}

.tools {
    width: 52px;
    padding: 263px 1px 0 0;
    border-right: 1px solid #ddd;
}

.tool-group {
    display: grid;
    grid-template-columns: 25px 25px;
    border-bottom: 1px solid #ccc;
}

.tool-group:last-child {
    border: 0;
}

.tool-group button {
    height: 25px;
    display: flex;
    justify-content: center;
    align-items: center;
}

.tool-group svg {
    width: 15px;
    height: 15px;
}

.tool-group .drop::after {
    right: 1px;
}

.tool-group .value {
    flex-direction: column;
    font: 7px/7px "Liberation Sans", sans-serif;
}

.value span {
    color: #aaa;
}

.value b {
    color: #222;
}

.tool-group .check {
    flex-direction: column;
    font: 9px/8px "Roboto Condensed", sans-serif;
}

.check svg {
    width: 10px;
    height: 8px;
    margin-left: 4px;
}

/* Design manager */
.manager {
    width: 304px;
    display: flex;
    flex-direction: column;
    border-right: 4px solid #eee;
    padding-bottom: 6px;
}

.manager-head {
    height: 25px;
    flex: none;
    display: flex;
    align-items: center;
    gap: 6px;
    padding-right: 2px;
    background-color: #d6d6d6;
}

.manager-head h2 {
    flex: 1;
    text-align: center;
}

.manager-head svg {
    width: 7px;
    height: 7px;
}

.manager-tools {
    height: 32px;
    flex: none;
    display: flex;
    justify-content: flex-end;
    align-items: center;
    gap: 3px;
    padding: 3px 10px 0 0;
}

.manager-tools button {
    width: 22px;
    height: 22px;
    display: flex;
    justify-content: center;
    align-items: center;
    border: 1px solid #ddd;
    background-color: #f6f6f6;
}

.manager-tools svg {
    width: 13px;
    height: 13px;
}

.groups {
    flex: 1;
    display: flex;
    flex-direction: column;
    margin: 0 6px 0 7px;
    border: 1px solid #ddd;
    background-color: #f3f3f3;
}

.group {
    flex: 1;
    display: flex;
    flex-direction: column;
    padding: 14px 7px 0;
    border-bottom: 2px solid #ebebeb;
}

.group:first-child {
    padding-top: 11px;
}

.group:last-child {
    border: 0;
}

.group-title {
    display: flex;
    align-items: center;
    gap: 5px;
    padding-right: 4px;
}

.group-title hr {
    flex: 1;
    margin: 0;
    border: 0;
    border-top: 1px solid #aaa;
}

.search {
    display: flex;
    align-items: center;
    gap: 12px;
    margin: 2px 0 5px;
}

.search label {
    width: 230px;
    height: 20px;
    display: flex;
    align-items: center;
    padding-left: 5px;
    border: 1px solid #aaa;
    background-color: #fff;
    position: relative;
}

.search label::after, .command-box::after {
    content: "";
    position: absolute;
    right: 3px;
    top: 7px;
    border: 3px solid transparent;
    border-top: 4px solid #555;
    border-bottom: 0;
}

.search svg {
    width: 10px;
    height: 10px;
}

.search button {
    width: 24px;
    height: 20px;
}

.search button svg {
    width: 14px;
    height: 14px;
    margin: 0 4px;
}

.search input {
    flex: 1;
    min-width: 0;
    margin-left: 7px;
    padding: 0;
    border: 0;
    background: none;
    font: inherit;
}

input::placeholder {
    color: #8c8c8c;
    opacity: 1;
}

.list {
    flex: 1;
    display: flex;
    flex-direction: column;
    justify-content: space-between;
    overflow: hidden;
    border-top: 1px solid #bbb;
    background-color: #fafafa;
}

.list table {
    width: 302px;
    table-layout: fixed;
    border-collapse: collapse;
}

.list th {
    padding: 2px 0 0;
    font-weight: normal;
    line-height: 10px;
}

.list .sorted {
    background: linear-gradient(#5aa0cc, #5aa0cc) center 0 / 4px 1px no-repeat;
}

.list .classes {
    width: 271px;
}

.list td {
    height: 11px;
    padding: 0 3px 0 0;
    text-align: right;
    line-height: 11px;
}

.selected {
    background-color: #0696d7;
    color: #fff;
}

/* Scroll bars */
.scroll {
    height: 13px;
    display: flex;
    justify-content: space-between;
    background-color: #ececec;
    line-height: 12px;
}

.scroll span {
    width: 14px;
    text-align: center;
}

.thumb {
    width: 108px;
    margin: 1px auto 1px 0;
    border: 1px solid #a2a2a2;
    background:
        repeating-linear-gradient(90deg, #777 0 1px, transparent 1px 2px) center / 6px 5px no-repeat,
        linear-gradient(#f4f4f4, #dedede 50%, #c8c8c8);
}

.thumb.long {
    width: 174px;
}

/* Editor */
.editor {
    flex: 1;
    min-width: 0;
    display: flex;
    flex-direction: column;
}

.command {
    height: 26px;
    flex: none;
    display: flex;
    align-items: center;
    padding: 1px 4px 0 5px;
}

.coords {
    width: 125px;
}

.command-box {
    flex: 1;
    position: relative;
}

.command input {
    width: 100%;
    height: 20px;
    display: block;
    padding: 0 4px;
    border: 1px solid #2a9fd6;
    background-color: #d3d3d3;
    font: inherit;
}

.canvas-row {
    flex: 1;
    min-height: 0;
    display: flex;
}

.canvas {
    flex: 1;
    min-width: 0;
    position: relative;
    background-color: #272727;
    border-right: 1px solid #000;
}

.board {
    width: 100%;
    height: 100%;
}

.dimension {
    fill: #b01212;
    font: 12px "Liberation Sans", sans-serif;
}

.part-label {
    fill: #b4b4b4;
    font: 8px "Liberation Mono", monospace;
}

.side-tabs {
    position: absolute;
    top: 7px;
    right: 1px;
    display: flex;
    flex-direction: column;
    gap: 12px;
}

.side-tabs button {
    width: 20px;
    height: 109px;
    display: flex;
    justify-content: center;
    align-items: center;
    gap: 7px;
    background-color: #444;
    color: #f4f4f4;
    font: bold 9px/12px Roboto, sans-serif;
    writing-mode: vertical-rl;
}

.side-tabs svg {
    width: 12px;
    height: 12px;
}

.v-scroll {
    width: 13px;
    display: flex;
    flex-direction: column;
    justify-content: space-between;
    align-items: center;
    color: #888;
}

.h-scroll {
    flex: none;
    padding-right: 13px;
    background-color: #f0f0f0;
}

.h-scroll .thumb {
    flex: 1;
    margin-left: 31px;
}

/* Status bar */
.status {
    height: 19px;
    flex: none;
    display: flex;
    align-items: center;
    gap: 5px;
    padding: 0 1px 0 4px;
    border-top: 1px solid #999;
}

.status span {
    flex: 1;
}

.status svg {
    width: 14px;
    height: 14px;
}

.alert {
    width: 15px;
    height: 15px;
    border-radius: 8px;
    background-color: #666;
    color: #fff;
    font-size: 12px;
    line-height: 15px;
    text-align: center;
}

/* Taskbar */
.taskbar {
    height: 30px;
    flex: none;
    display: flex;
    background: linear-gradient(#3b4a5c, #10161e 2px, #070b12);
    color: #fff;
}

.start {
    width: 45px;
    padding-left: 6px;
}

.start svg {
    width: 28px;
    height: 28px;
}

.tasks {
    width: 838px;
    display: grid;
    grid-auto-flow: column;
    grid-auto-columns: minmax(0, 1fr);
}

.tasks button {
    display: flex;
    justify-content: center;
    align-items: center;
    margin: 1px 3px 1px 0;
    border: 1px solid transparent;
    border-radius: 2px;
}

.tasks .open {
    border-color: #7e8287;
    background: linear-gradient(160deg, #85888c, #3a3e43 45%, #16191d 55%, #24282c);
}

.tasks .stacked {
    border-right: 5px double #7e8287;
}

.tasks .current {
    background: linear-gradient(160deg, #d0d0d0, #8b8b8b 45%, #6c6c6c 55%, #a4a4a4);
}

.tasks svg {
    width: 24px;
    height: 24px;
}

.adobe {
    width: 21px;
    height: 20px;
    border: 1px solid;
    background-color: #07162b;
    font: bold 12px/18px "Open Sans", sans-serif;
    text-align: center;
}

.ps {
    color: #31c5f0;
}

.au {
    background-color: #02211f;
    color: #00d8b0;
}

.qb {
    width: 22px;
    height: 22px;
    border: 1px solid #c8d8f0;
    border-radius: 11px;
    background-color: #4878c0;
    font-size: 13px;
    font-weight: normal;
    line-height: 18px;
    text-align: center;
}

.label-text {
    fill: #1f4fb0;
    font: bold 5px "Liberation Sans", sans-serif;
}

.cs-text {
    fill: #444;
    font: 8px "Liberation Sans", sans-serif;
}

.eagle-text {
    fill: #111;
    font: bold 6px "Liberation Sans", sans-serif;
}

.f360-text {
    fill: #d9822b;
    font: 5px "Liberation Sans", sans-serif;
}

.tray {
    flex: 1;
    display: flex;
    justify-content: flex-end;
    align-items: center;
    gap: 6px;
}

.tray svg {
    width: 12px;
    height: 12px;
}

.tray .up {
    margin: 0 3px 0 6px;
}

.tray time {
    margin: 0 0 0 4px;
    text-align: center;
}

.tray svg + time {
    padding-left: 2px;
}

.show-desktop {
    width: 10px;
    height: 28px;
    margin-right: 1px;
    border: 1px solid #59636e;
    background: linear-gradient(135deg, #555c64, #11151a);
}

/* Drop-down menus */
.menu {
    position: absolute;
    background-color: #fff;
    box-shadow: 1px 1px 1px #777;
}

.file-menu {
    top: 40px;
    left: 0;
    width: 210px;
}

.import-menu {
    top: 280px;
    left: 208px;
    width: 138px;
}

.menu button {
    width: 100%;
    height: 15px;
    display: grid;
    grid-template-columns: 15px 1fr 54px;
    column-gap: 4px;
    align-items: center;
    padding-left: 4px;
    text-align: left;
}

.menu button.tall {
    height: 19px;
}

.menu button.taller {
    height: 20px;
}

.menu button.hover {
    background-color: #d6d6d6;
}

.menu span {
    grid-column: 2;
    grid-row: 1;
    white-space: nowrap;
}

.menu kbd {
    grid-column: 3;
    grid-row: 1;
    font: inherit;
}

.menu .more::after {
    content: "";
    grid-column: 3;
    grid-row: 1;
    width: 0;
    margin-left: 45px;
    border: 3px solid transparent;
    border-left: 4px solid #555;
    border-right: 0;
}

.menu svg {
    width: 15px;
    height: 15px;
}

.menu hr {
    height: 1px;
    margin: 0;
    border: 0;
    background-color: #ddd;
}

.sch i {
    display: block;
    height: 8px;
    background-color: #c8202a;
    color: #fff;
    font: bold 7px/8px "Roboto Condensed", sans-serif;
    text-align: center;
}

.sch i:last-child {
    background-color: #bbb;
}
```
